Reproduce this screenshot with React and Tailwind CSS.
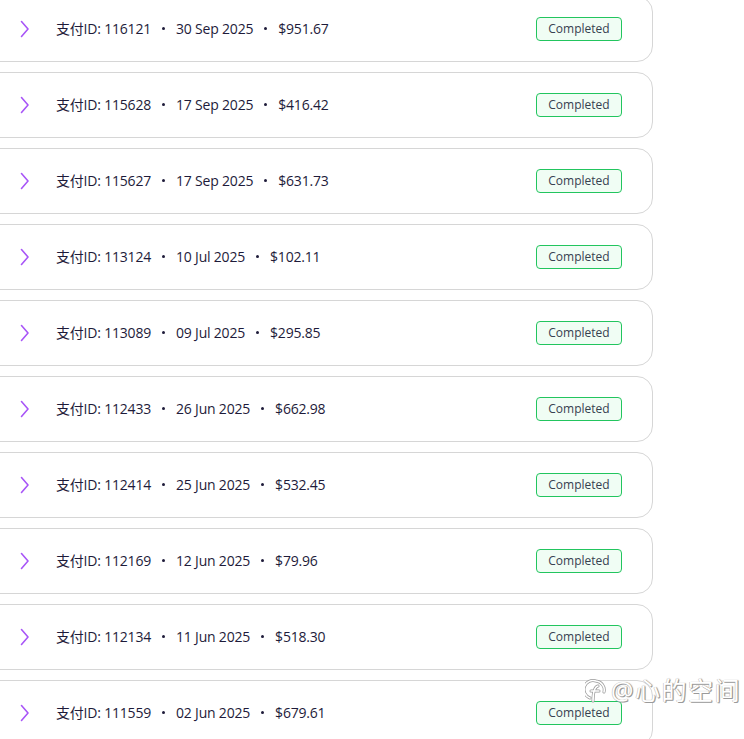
import React from "react";

const rows = [
  ["116121", "30 Sep 2025", "$951.67"],
  ["115628", "17 Sep 2025", "$416.42"],
  ["115627", "17 Sep 2025", "$631.73"],
  ["113124", "10 Jul 2025", "$102.11"],
  ["113089", "09 Jul 2025", "$295.85"],
  ["112433", "26 Jun 2025", "$662.98"],
  ["112414", "25 Jun 2025", "$532.45"],
  ["112169", "12 Jun 2025", "$79.96"],
  ["112134", "11 Jun 2025", "$518.30"],
  ["111559", "02 Jun 2025", "$679.61"],
];

function Chevron() {
  return (
    <svg width="10" height="18" viewBox="0 0 10 18" fill="none" className="shrink-0">
      <polyline points="1.5,1.5 8,9 1.5,16.5" stroke="#a855f7" strokeWidth="1.6" strokeLinecap="round" strokeLinejoin="round" />
    </svg>
  );
}

function Dot() {
  return <span className="w-[3px] h-[3px] rounded-full bg-[#1e1b3a] shrink-0" />;
}

export default function App() {
  return (
    <div className="relative w-[744px] h-[739px] overflow-hidden bg-white" style={{ fontFamily: '"Open Sans", "Noto Sans CJK SC", sans-serif' }}>
      <div className="-mt-[4px] -ml-[20px] w-[673px] flex flex-col gap-[10px]">
        {rows.map(([id, date, amt]) => (
          <div key={id} className="h-[66px] rounded-[16px] border border-[#d6d6d6] bg-white flex items-center pl-[39px] pr-[30px]">
            <Chevron />
            <div className="ml-[26px] -mt-[1px] flex items-center gap-[11px] text-[14px] text-[#1e1b3a] tracking-[-0.2px]">
              <span>支付ID: {id}</span>
              <Dot />
              <span>{date}</span>
              <Dot />
              <span className="font-medium">{amt}</span>
            </div>
            <div className="ml-auto h-[24px] w-[86px] flex items-center justify-center rounded-[4px] border border-[#22c55e] bg-[#f0fdf4] text-[12px] text-[#374151]">
              Completed
            </div>
          </div>
        ))}
      </div>
      <div className="absolute left-[585px] top-[677px] flex items-center gap-[4px] text-white text-[25px] leading-none tracking-[1.5px]" style={{ textShadow: "1px 1px 0 #9a9a9a, -0.5px -0.5px 0 #bbb, 1px 0 1px #999" }}>
        <svg width="22" height="26" viewBox="0 0 22 26" fill="none">
          <g stroke="#999" strokeWidth="3" strokeLinecap="round" fill="none">
            <path d="M5 21 A9 9 0 0 1 11 4 A9 9 0 0 1 19 15" />
            <path d="M8 24 C8 16 9 10 13 9 M6 14 L14 14" />
          </g>
          <g stroke="#fff" strokeWidth="1.6" strokeLinecap="round" fill="none">
            <path d="M5 21 A9 9 0 0 1 11 4 A9 9 0 0 1 19 15" />
            <path d="M8 24 C8 16 9 10 13 9 M6 14 L14 14" />
          </g>
        </svg>
        <span>@心的空间</span>
      </div>
    </div>
  );
}
